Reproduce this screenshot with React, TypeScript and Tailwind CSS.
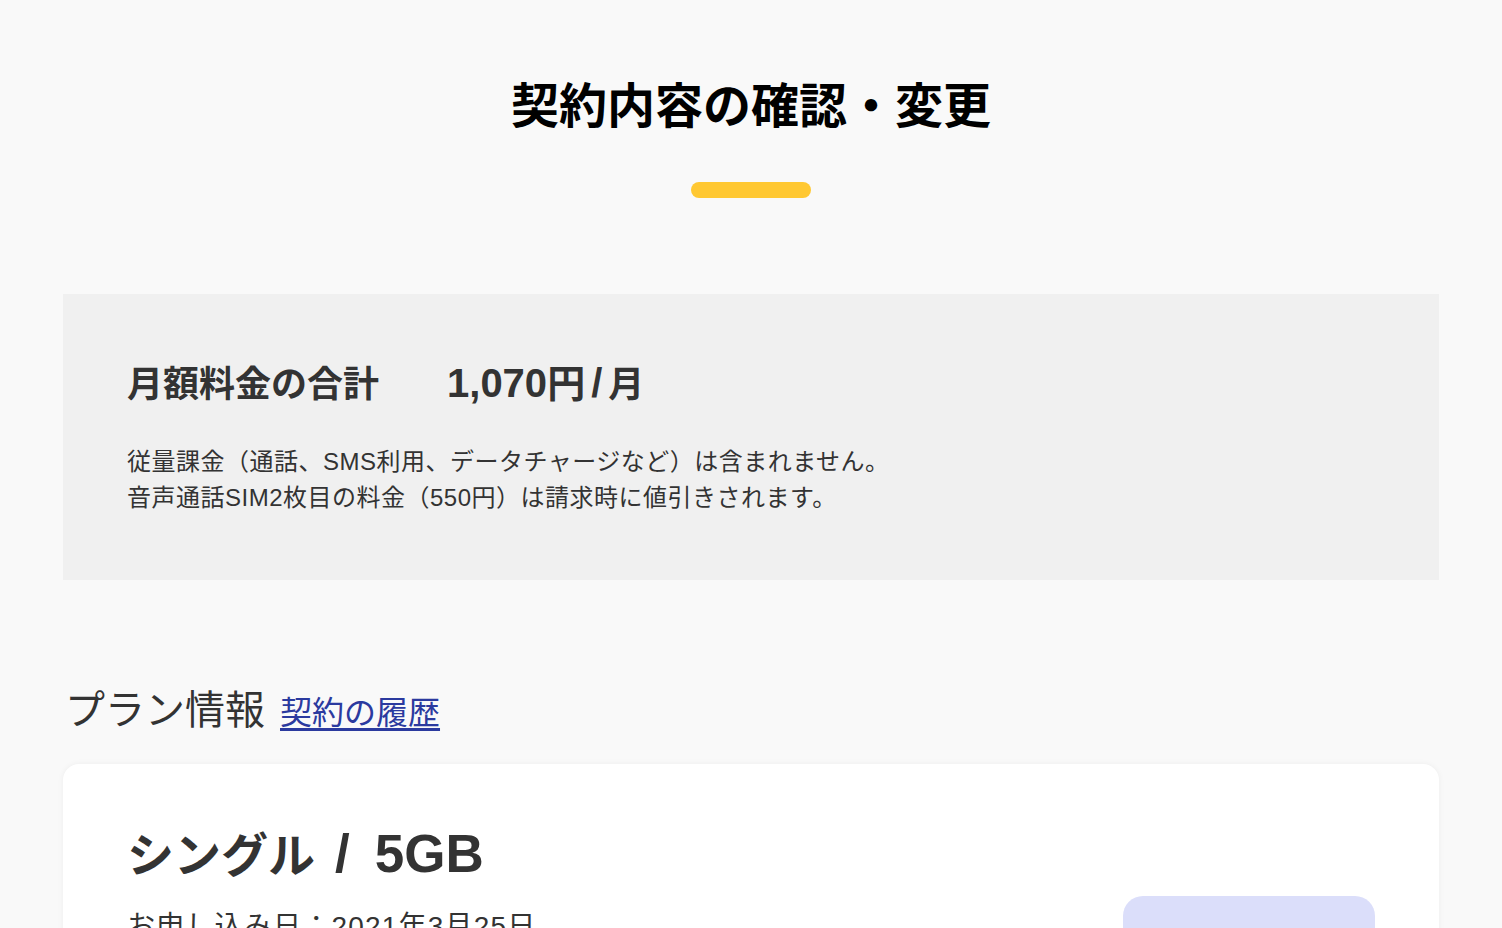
import React from "react";

const font = { fontFamily: '"Liberation Sans", "Noto Sans CJK JP", sans-serif' };

export default function App() {
  return (
    <div className="min-h-screen bg-[#f9f9f9] text-[#333]" style={font}>
      <div className="mx-auto w-[1376px] pb-20">
        <header className="flex flex-col items-center pt-[66px]">
          <h1 className="text-[48px] font-bold leading-[72px] text-black" style={{ fontFamily: '"Noto Sans CJK JP", sans-serif' }}>契約内容の確認・変更</h1>
          <div className="mt-[44px] h-4 w-[120px] rounded-full bg-[#ffc832]" />
        </header>

        <section className="mt-[96px] bg-[#f0f0f0] px-16 pt-[62px] pb-[64px]">
          <div className="flex items-baseline gap-[68px]">
            <h2 className="text-[36px] font-bold leading-[54px]">月額料金の合計</h2>
            <p className="text-[40px] font-bold leading-[54px]">
              1,070<span className="text-[38px]">円</span><span className="mx-[6px]">/</span><span className="text-[36px]">月</span>
            </p>
          </div>
          <div className="mt-[32px] text-[24px] leading-[36px] tracking-[0.5px]">
            <p>従量課金（通話、SMS利用、データチャージなど）は含まれません。</p>
            <p>音声通話SIM2枚目の料金（550円）は請求時に値引きされます。</p>
          </div>
        </section>

        <section className="mt-[100px]">
          <div className="flex items-baseline gap-[15px] pl-[2px]">
            <h2 className="text-[40px] leading-[60px] font-normal">プラン情報</h2>
            <a href="#" className="text-[32px] leading-[48px] text-[#2b3a9f] underline underline-offset-[4px]">契約の履歴</a>
          </div>
          <div className="mt-[24px] rounded-2xl bg-white px-16 pt-[54px] pb-16 shadow-[0_0_6px_rgba(0,0,0,0.05)]">
            <div className="flex items-start justify-between">
              <div>
                <h3 className="text-[53px] font-bold leading-[72px]">
                  <span className="text-[47px]">シングル</span>
                  <span className="ml-[20px] mr-[25px]">/</span>
                  5GB
                </h3>
                <p className="mt-[14px] text-[28px] leading-[42px] tracking-[1.2px]">お申し込み日：2021年3月25日</p>
              </div>
              <button className="mt-[78px] h-[72px] w-[252px] rounded-[20px] bg-[#dbdefa]" />
            </div>
          </div>
        </section>
      </div>
    </div>
  );
}
